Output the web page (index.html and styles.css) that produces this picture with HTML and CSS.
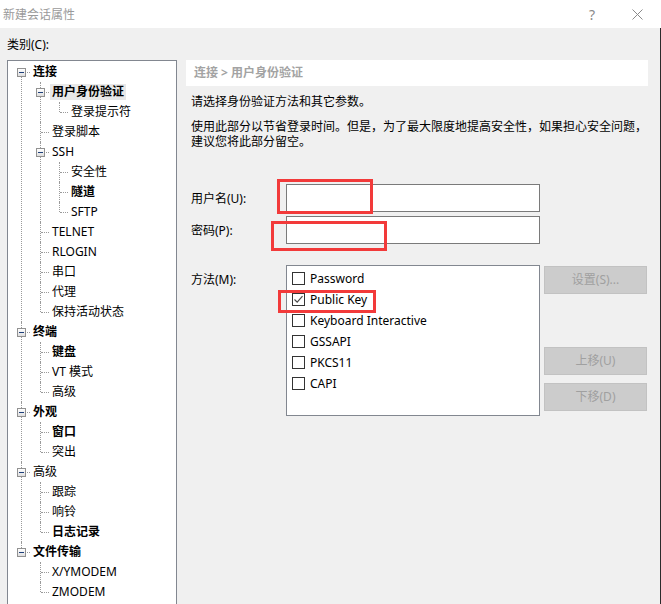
FILE: index.html
```html
<!DOCTYPE html>
<html lang="zh-CN">
<head>
  <meta charset="UTF-8">
  <title>新建会话属性</title>
  <link rel="stylesheet" href="styles.css">
</head>
<body>
  <div class="titlebar">
    <span class="title">新建会话属性</span>
    <span class="help">?</span>
    <svg class="close" width="11" height="11" viewBox="0 0 11 11">
      <path d="M0.5 0.5 L10.5 10.5 M10.5 0.5 L0.5 10.5" stroke="#8a8a8a" stroke-width="1" fill="none"/>
    </svg>
  </div>

  <div class="dialog">
    <div class="left">
      <div class="cat-label">类别(C):</div>
      <div class="tree">
        <ul class="root">
          <li class="open"><div class="row"><span class="exp"></span><b>连接</b></div>
            <ul>
              <li class="open"><div class="row"><span class="exp"></span><span class="sel">用户身份验证</span></div>
                <ul>
                  <li><div class="row">登录提示符</div></li>
                </ul>
              </li>
              <li><div class="row">登录脚本</div></li>
              <li class="open"><div class="row"><span class="exp"></span>SSH</div>
                <ul>
                  <li><div class="row">安全性</div></li>
                  <li><div class="row"><b>隧道</b></div></li>
                  <li><div class="row">SFTP</div></li>
                </ul>
              </li>
              <li><div class="row">TELNET</div></li>
              <li><div class="row">RLOGIN</div></li>
              <li><div class="row">串口</div></li>
              <li><div class="row">代理</div></li>
              <li><div class="row">保持活动状态</div></li>
            </ul>
          </li>
          <li class="open"><div class="row"><span class="exp"></span><b>终端</b></div>
            <ul>
              <li><div class="row"><b>键盘</b></div></li>
              <li><div class="row">VT 模式</div></li>
              <li><div class="row">高级</div></li>
            </ul>
          </li>
          <li class="open"><div class="row"><span class="exp"></span><b>外观</b></div>
            <ul>
              <li><div class="row"><b>窗口</b></div></li>
              <li><div class="row">突出</div></li>
            </ul>
          </li>
          <li class="open"><div class="row"><span class="exp"></span>高级</div>
            <ul>
              <li><div class="row">跟踪</div></li>
              <li><div class="row">响铃</div></li>
              <li><div class="row"><b>日志记录</b></div></li>
            </ul>
          </li>
          <li class="open"><div class="row"><span class="exp"></span><b>文件传输</b></div>
            <ul>
              <li><div class="row">X/YMODEM</div></li>
              <li><div class="row">ZMODEM</div></li>
            </ul>
          </li>
        </ul>
      </div>
    </div>

    <div class="right">
      <div class="crumb">连接 &gt; 用户身份验证</div>
      <div class="desc">请选择身份验证方法和其它参数。</div>
      <div class="desc desc-more">使用此部分以节省登录时间。但是，为了最大限度地提高安全性，如果担心安全问题，</div>
      <div class="desc desc-next">建议您将此部分留空。</div>

      <div class="field field-first">
        <label>用户名(U):</label>
        <div class="input"></div>
      </div>
      <div class="field">
        <label>密码(P):</label>
        <div class="input"></div>
      </div>

      <div class="method">
        <label>方法(M):</label>
        <div class="listbox">
          <div class="item"><span class="check"></span>Password</div>
          <div class="item"><span class="check checked">
            <svg width="11" height="11" viewBox="0 0 11 11"><path d="M1.5 5.5 L4.2 8.2 L9.5 2.2" stroke="#4a4a4a" stroke-width="1.2" fill="none"/></svg>
          </span>Public Key</div>
          <div class="item"><span class="check"></span>Keyboard Interactive</div>
          <div class="item"><span class="check"></span>GSSAPI</div>
          <div class="item"><span class="check"></span>PKCS11</div>
          <div class="item"><span class="check"></span>CAPI</div>
        </div>
        <div class="buttons">
          <div class="btn">设置(S)...</div>
          <div class="btn btn-up">上移(U)</div>
          <div class="btn btn-down">下移(D)</div>
        </div>
      </div>
    </div>
  </div>

  <!-- red annotation boxes drawn over the form -->
  <div class="mark mark-user"></div>
  <div class="mark mark-pass"></div>
  <div class="mark mark-key"></div>
</body>
</html>
```

FILE: styles.css
```css
body {
  margin: 0;
  width: 661px;
  height: 604px;
  overflow: hidden;
  position: relative;
  font-family: "Noto Sans", "Noto Sans CJK SC", sans-serif;
  font-size: 12px;
  color: #000;
  background: #f0f0f0;
}
.titlebar {
  height: 28px;
  background: #fff;
  display: flex;
  align-items: center;
  padding-left: 3px;
}
.title {
  flex: 1;
  color: #9a9a9a;
}
.help {
  width: 12px;
  text-align: center;
  color: #8a8a8a;
  font-size: 14px;
  margin-right: 34px;
}
.close {
  margin-right: 18px;
}
.dialog {
  display: flex;
  height: 576px;
  border-right: 1px solid #2b2b2b;
  box-sizing: border-box;
}
.left {
  flex: none;
  padding: 9px 0 0 7px;
}
.cat-label {
  line-height: 16px;
  margin-bottom: 7px;
}
.tree {
  width: 170px;
  height: 560px;
  box-sizing: border-box;
  border: 1px solid #828790;
  background: #fff;
  padding-top: 1px;
  overflow: hidden;
}
.tree ul {
  list-style: none;
  margin: 0;
  padding: 0 0 0 19px;
}
.tree ul.root {
  padding-left: 0;
}
.tree li {
  position: relative;
}
.tree li::before {
  content: '';
  position: absolute;
  left: 13px;
  top: 0;
  bottom: 0;
  border-left: 1px dotted #9a9a9a;
}
.tree li:last-child::before {
  bottom: auto;
  height: 10px;
}
.tree .root > li:first-child::before {
  top: 10px;
}
.tree .row {
  position: relative;
  height: 20px;
  line-height: 20px;
  padding-left: 25px;
  white-space: nowrap;
}
.tree .row::before {
  content: '';
  position: absolute;
  left: 14px;
  top: 10px;
  width: 8px;
  border-top: 1px dotted #9a9a9a;
}
.tree b {
  font-weight: bold;
}
.exp {
  position: absolute;
  left: 9px;
  top: 6px;
  width: 9px;
  height: 9px;
  box-sizing: border-box;
  border: 1px solid #919191;
  background: linear-gradient(#ffffff, #dedede);
  z-index: 1;
}
.exp::after {
  content: '';
  position: absolute;
  left: 1px;
  top: 3px;
  width: 5px;
  height: 1px;
  background: #1e3f7a;
}
.sel {
  display: inline-block;
  background: #e8e8e8;
  font-weight: bold;
  line-height: 16px;
  padding: 0 2px;
  margin-left: -2px;
}
.right {
  flex: none;
  width: 462px;
  margin-left: 9px;
  padding-top: 32px;
}
.crumb {
  height: 26px;
  line-height: 26px;
  background: #fff;
  padding-left: 8px;
  color: #a3a3a3;
  font-weight: bold;
}
.desc {
  margin-top: 8px;
  padding-left: 5px;
  height: 15px;
  line-height: 15px;
  white-space: nowrap;
}
.desc-more {
  margin-top: 10px;
}
.desc-next {
  margin-top: 0;
}
.field {
  display: flex;
  align-items: center;
  margin-top: 4px;
  padding-left: 5px;
}
.field-first {
  margin-top: 35px;
}
.field label,
.method label {
  width: 95px;
  flex: none;
}
.input {
  width: 254px;
  height: 28px;
  box-sizing: border-box;
  border: 1px solid #7a7a7a;
  background: #fff;
}
.method {
  display: flex;
  align-items: flex-start;
  margin-top: 21px;
  padding-left: 5px;
}
.method label {
  padding-top: 7px;
  line-height: 15px;
}
.listbox {
  width: 254px;
  height: 151px;
  box-sizing: border-box;
  border: 1px solid #828790;
  background: #fff;
  padding-top: 2px;
}
.item {
  display: flex;
  align-items: center;
  height: 21px;
  padding-left: 5px;
  gap: 5px;
}
.check {
  width: 13px;
  height: 13px;
  box-sizing: border-box;
  border: 1px solid #333;
  background: #fff;
  display: flex;
  align-items: center;
  justify-content: center;
}
.buttons {
  margin-left: 4px;
  margin-top: 1px;
  display: flex;
  flex-direction: column;
}
.btn {
  width: 103px;
  height: 28px;
  box-sizing: border-box;
  border: 1px solid #c2c2c2;
  background: #cccccc;
  color: #a0a0a0;
  text-align: center;
  line-height: 26px;
}
.btn-up {
  margin-top: 53px;
}
.btn-down {
  margin-top: 8px;
}
.mark {
  position: absolute;
  border: 3px solid #f23a3a;
  box-sizing: border-box;
}
.mark-user {
  left: 277px;
  top: 179px;
  width: 96px;
  height: 35px;
}
.mark-pass {
  left: 271px;
  top: 221px;
  width: 116px;
  height: 30px;
}
.mark-key {
  left: 278px;
  top: 290px;
  width: 98px;
  height: 23px;
}
```
